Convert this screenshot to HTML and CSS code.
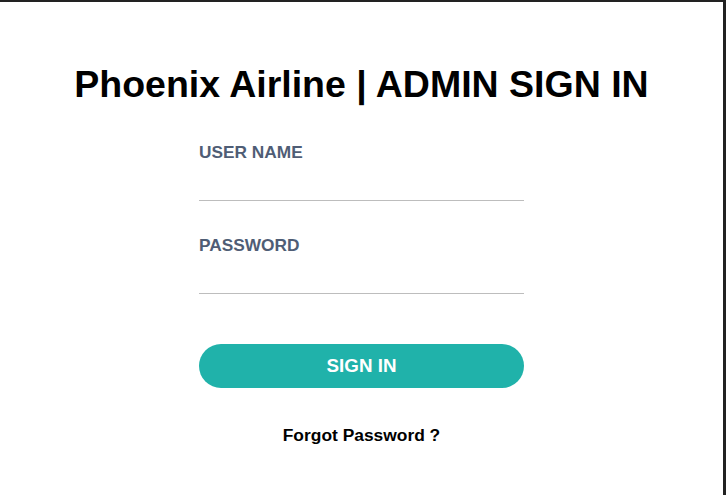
FILE: index.html
```html
<!DOCTYPE html>
<html>
<head>
<meta charset="utf-8">
<link rel="stylesheet" href="styles.css">
</head>
<body>
<div class="page">
  <h1 class="title">Phoenix Airline | ADMIN SIGN IN</h1>
  <form class="form">
    <label class="field">
      <span class="label">USER NAME</span>
      <input class="input" type="text">
    </label>
    <label class="field">
      <span class="label">PASSWORD</span>
      <input class="input" type="password">
    </label>
    <button class="btn" type="button">SIGN IN</button>
    <a class="forgot">Forgot Password ?</a>
  </form>
</div>
</body>
</html>
```
FILE: styles.css
```css
html, body {
  margin: 0;
  padding: 0;
  background: #fff;
}
.page {
  box-sizing: border-box;
  height: 495px;
  border-top: 2px solid #222;
  border-right: 3px solid #222;
  font-family: "Liberation Sans", Arial, sans-serif;
  display: flex;
  flex-direction: column;
  align-items: center;
}
.title {
  margin: 61px 0 0;
  font-size: 37.5px;
  line-height: 43px;
  font-weight: bold;
  color: #000;
}
.form {
  width: 325px;
  margin-top: 36px;
  display: flex;
  flex-direction: column;
}
.field {
  display: flex;
  flex-direction: column;
  margin-bottom: 34px;
}
.label {
  font-size: 17.3px;
  line-height: 20px;
  font-weight: bold;
  color: #4f5d75;
}
.input {
  height: 39px;
  box-sizing: border-box;
  border: none;
  border-bottom: 1px solid #bdbdbd;
  outline: none;
  background: transparent;
  padding: 0;
}
.btn {
  margin-top: 16px;
  height: 44px;
  border: none;
  border-radius: 22px;
  background: #20b2aa;
  color: #fff;
  font-family: inherit;
  font-size: 18.8px;
  font-weight: bold;
  padding: 0;
}
.forgot {
  margin-top: 37px;
  text-align: center;
  font-size: 17.4px;
  line-height: 20px;
  font-weight: bold;
  color: #000;
}
```
